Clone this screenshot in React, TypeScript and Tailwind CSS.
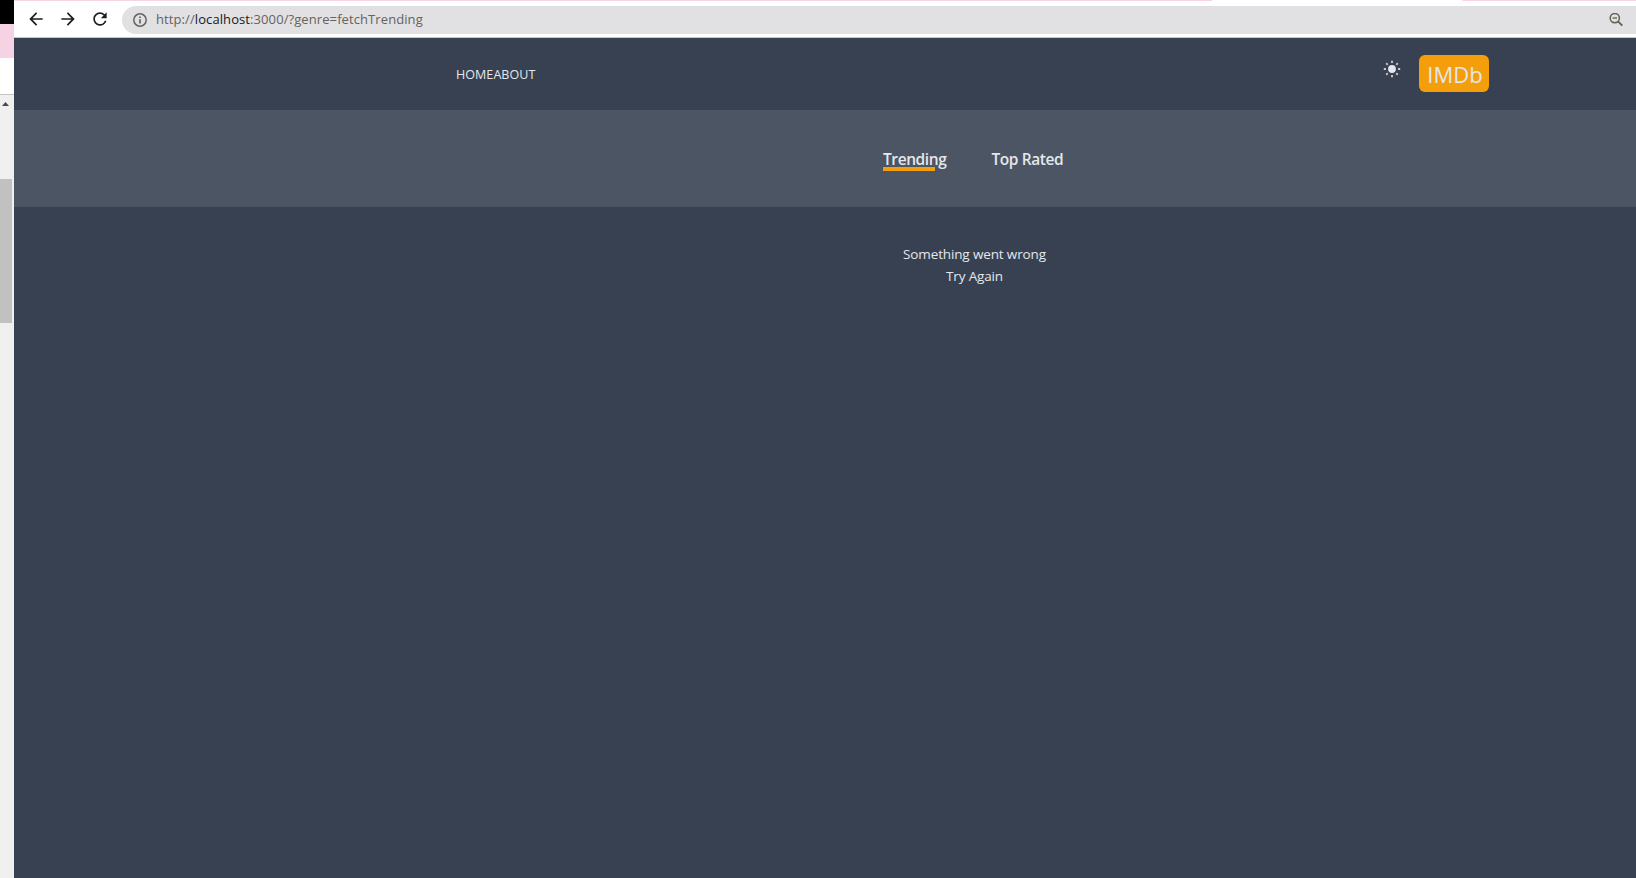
import type { ReactNode } from 'react'
import { MdArrowBack, MdArrowForward, MdRefresh } from 'react-icons/md'

const RAY_ANGLES = [0, 45, 90, 135, 180, 225, 270, 315]

function SunIcon() {
  return (
    <svg className="h-[18px] w-[18px]" viewBox="0 0 18 18" fill="#e5e7eb">
      <circle cx="9" cy="9" r="3.9" />
      {RAY_ANGLES.map(angle => (
        <rect
          key={angle}
          x="8.1"
          y="0.8"
          width="1.8"
          height="2.2"
          rx="0.3"
          opacity="0.85"
          transform={`rotate(${angle} 9 9)`}
        />
      ))}
    </svg>
  )
}

function InfoIcon() {
  return (
    <svg className="h-4 w-4" viewBox="0 0 16 16" fill="none" stroke="#66625e">
      <circle cx="8" cy="8" r="6.2" strokeWidth="1.5" />
      <path d="M8 7.2v4.2M8 4.4v1.6" strokeWidth="1.7" />
    </svg>
  )
}

function ZoomOutIcon() {
  return (
    <svg className="mr-[13px] h-[14px] w-[14px]" viewBox="0 0 14 14" fill="none" stroke="#66604f">
      <circle cx="5.8" cy="5.1" r="4.6" strokeWidth="1.5" />
      <path d="M3.6 5h4.4" strokeWidth="1.3" />
      <path d="M9 8.3l4.3 4.3" strokeWidth="1.9" />
    </svg>
  )
}

// Sliver of the window that sits behind the browser
function BackgroundWindow() {
  return (
    <aside className="flex w-[14px] shrink-0 flex-col bg-[#f0f0f0]">
      <div className="h-6 bg-black" />
      <div className="h-[34px] bg-[#f5d3e4]" />
      <div className="h-9 bg-white" />
      <div className="h-px bg-[#c4c4c4]" />
      <svg className="mt-[7px] ml-[2px] h-1 w-[7px]" viewBox="0 0 7 4" fill="#444a55">
        <path d="M3.5 0 7 4H0z" />
      </svg>
      <div className="mt-[73px] h-36 w-3 bg-[#c1c1c1]" />
    </aside>
  )
}

function AddressBar() {
  return (
    <div className="flex h-[38px] flex-col border-b border-[#c3c5c8] bg-white">
      <div className="flex h-px shrink-0 justify-between bg-white">
        <div className="w-[1198px] bg-[#f7d3e6]" />
        <div className="w-[174px] bg-[#f7d3e6]" />
      </div>
      <div className="flex flex-1 items-center pl-3 text-[#1d1e22]">
        <MdArrowBack className="mr-3 h-5 w-5" />
        <MdArrowForward className="mr-3 h-5 w-5" />
        <MdRefresh className="mr-3 h-5 w-5" />
        <div className="mt-px flex h-7 flex-1 items-center rounded-l-full bg-[#e1e1e3] pl-[10px] text-[#66625e]">
          <InfoIcon />
          <p className="ml-2 flex-1 text-[13px] tracking-[0.09px] whitespace-nowrap">
            http://<span className="text-[#17181b]">localhost</span>:3000/?genre=fetchTrending
          </p>
          <ZoomOutIcon />
        </div>
      </div>
    </div>
  )
}

function Header() {
  return (
    <header className="flex h-[72px] items-center">
      <nav className="ml-[442px] flex pt-[2px] text-[12.5px] leading-5 tracking-[0.06px]">
        <span>HOME</span>
        <span>ABOUT</span>
      </nav>
      <div className="mr-[147px] mb-[2px] ml-auto flex items-start">
        <div className="mt-[5px] mr-[18px]">
          <SunIcon />
        </div>
        <div className="flex h-[37px] w-[70px] items-center justify-center rounded-md bg-[#f59e0b] pt-[2px] pl-[2px] text-[22px] leading-none">
          IMDb
        </div>
      </div>
    </header>
  )
}

function Tab({ active = false, children }: { active?: boolean; children: ReactNode }) {
  return (
    <a className="relative text-[15.5px] leading-[23px] font-semibold tracking-[-0.4px] whitespace-nowrap">
      {active && <span className="absolute top-[19px] left-0 h-1 w-[52px] bg-[#f59e0b]" />}
      <span className="relative">{children}</span>
    </a>
  )
}

export default function App() {
  return (
    <div className="flex h-[878px] w-[1636px] overflow-hidden font-['Open_Sans','Noto_Sans',sans-serif]">
      <BackgroundWindow />
      <div className="flex flex-1 flex-col bg-[#384152] text-[#e5e7eb]">
        <AddressBar />
        <Header />
        <div className="flex h-[97px] items-start gap-[45px] bg-[#4c5563] pt-[38px] pl-[869px]">
          <Tab active>Trending</Tab>
          <Tab>Top Rated</Tab>
        </div>
        <main className="ml-[299px] pt-9 text-center text-[13.5px] leading-[22px] tracking-[-0.14px]">
          <h1>Something went wrong</h1>
          <p>Try Again</p>
        </main>
      </div>
    </div>
  )
}
